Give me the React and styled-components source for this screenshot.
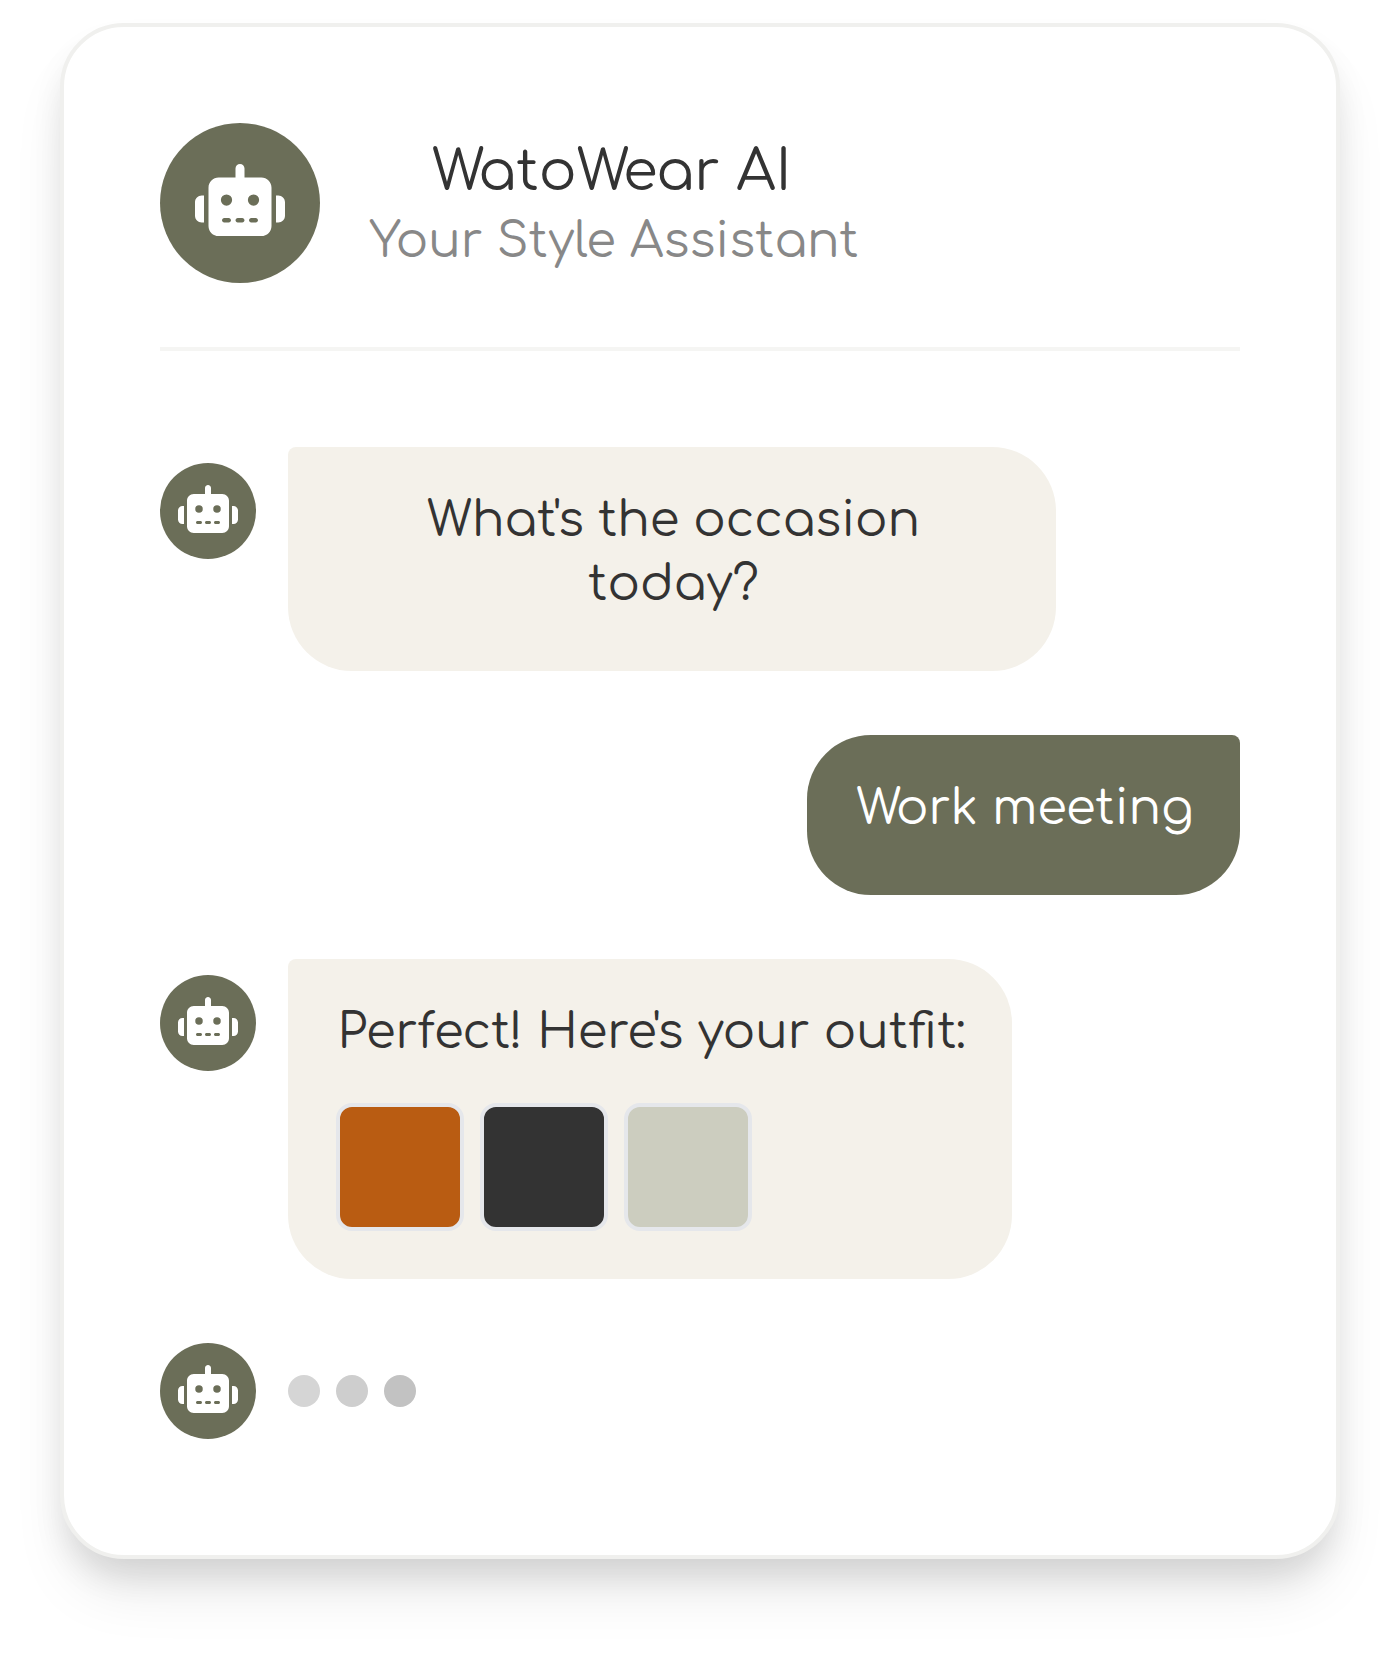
import React from "react";
import styled, { createGlobalStyle } from "styled-components";
import { FaRobot } from "react-icons/fa6";

const Global = createGlobalStyle`
  *, *::before, *::after { box-sizing: border-box; }
  body { margin: 0; background: #fff; color: #333; font-family: "Comfortaa", Inter, sans-serif; }
  p, h1 { margin: 0; }
`;

const Page = styled.main`
  height: 1657px;
  padding: 23.33px 60px 0;
  overflow: hidden;
`;

const Card = styled.section`
  height: 1536px;
  padding: 96px;
  background: #fff;
  border: 4px solid #f0f0ee;
  border-radius: 64px;
  box-shadow:
    0 40px 60px -12px rgba(0, 0, 0, 0.1),
    0 20px 32px -4px rgba(0, 0, 10, 0.1);
`;

const Header = styled.header`
  display: flex;
  align-items: center;
  gap: 48px;
  padding-bottom: 64px;
  margin-bottom: 96px;
  border-bottom: 4px solid #f5f5f3;
`;

const Avatar = styled.div`
  flex: none;
  display: grid;
  place-items: center;
  width: ${p => p.$size}px;
  height: ${p => p.$size}px;
  border-radius: 50%;
  background: #6b6e58;
  color: #fff;

  svg {
    display: block;
    width: ${p => p.$icon}px;
    height: ${p => p.$icon * 0.8}px;
    margin-bottom: ${p => p.$size * 0.04}px;
  }
`;

const Titles = styled.div`
  padding: 2px 0 0 1.5px;
  text-align: center;
  white-space: nowrap;
`;

const Title = styled.h1`
  padding-right: 5px;
  font-size: 56px;
  line-height: 75px;
  font-weight: 400;
`;

const Subtitle = styled.p`
  font-size: 48px;
  line-height: 64px;
  color: #888;
`;

const Chat = styled.div`
  display: flex;
  flex-direction: column;
  gap: 64px;
`;

const Row = styled.div`
  display: flex;
  gap: 32px;
  justify-content: ${p => (p.$mine ? "flex-end" : "flex-start")};
  align-items: ${p => (p.$typing ? "center" : "flex-start")};

  > ${Avatar} {
    margin-top: ${p => (p.$typing ? 0 : 16)}px;
  }
`;

const Bubble = styled.div`
  width: ${p => p.$width}px;
  padding: 42px 46.5px 48px 48px;
  background: ${p => (p.$mine ? "#6b6e58" : "#f4f1ea")};
  color: ${p => (p.$mine ? "#fff" : "#333")};
  border-radius: ${p => (p.$mine ? "64px 8px 64px 64px" : "8px 64px 64px 64px")};
  text-align: ${p => (p.$center ? "center" : "left")};
`;

const Line = styled.p`
  padding: 0 0 6px 1.5px;
  font-size: 48px;
  line-height: 64px;
  white-space: nowrap;
`;

const Swatches = styled.div`
  display: flex;
  gap: 16px;
  margin-top: 32px;
`;

const Swatch = styled.div`
  width: 128px;
  height: 128px;
  border: 4px solid #e5e7eb;
  border-radius: 16px;
  background: ${p => p.$color};
`;

const Dots = styled.div`
  display: flex;
  gap: 16px;
`;

const Dot = styled.div`
  width: 32px;
  height: 32px;
  border-radius: 50%;
  background: ${p => p.$color};
`;

const outfit = ["#b95c12", "#333333", "#cccdbf"];
const dots = ["#d5d5d5", "#cecece", "#c2c2c2"];

function BotAvatar({ large }) {
  return (
    <Avatar $size={large ? 160 : 96} $icon={large ? 90 : 60}>
      <FaRobot />
    </Avatar>
  );
}

export default function App() {
  return (
    <Page>
      <Global />
      <Card>
        <Header>
          <BotAvatar large />
          <Titles>
            <Title>WatoWear AI</Title>
            <Subtitle>Your Style Assistant</Subtitle>
          </Titles>
        </Header>
        <Chat>
          <Row>
            <BotAvatar />
            <Bubble $width={768} $center>
              <Line>What's the occasion<br />today?</Line>
            </Bubble>
          </Row>
          <Row $mine>
            <Bubble $mine $width={433.33}>
              <Line>Work meeting</Line>
            </Bubble>
          </Row>
          <Row>
            <BotAvatar />
            <Bubble $width={724}>
              <Line>Perfect! Here's your outfit:</Line>
              <Swatches>
                {outfit.map(c => <Swatch key={c} $color={c} />)}
              </Swatches>
            </Bubble>
          </Row>
          <Row $typing>
            <BotAvatar />
            <Dots>
              {dots.map(c => <Dot key={c} $color={c} />)}
            </Dots>
          </Row>
        </Chat>
      </Card>
    </Page>
  );
}
